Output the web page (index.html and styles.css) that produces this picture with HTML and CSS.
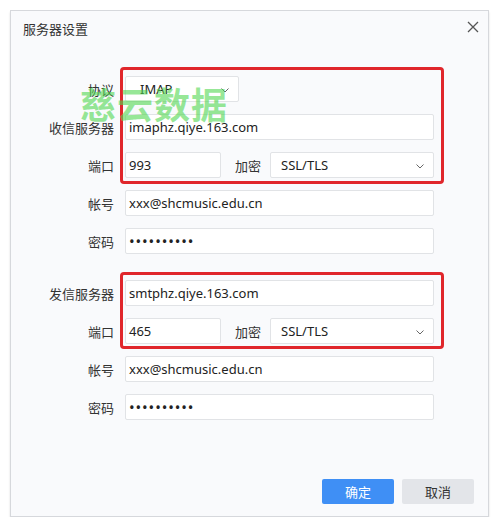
FILE: index.html
```html
<!DOCTYPE html>
<html lang="zh">
<head>
<meta charset="utf-8">
<link rel="stylesheet" href="styles.css">
</head>
<body>
<div class="dialog">
  <div class="header">
    <span class="title">服务器设置</span>
    <svg class="close" width="12" height="12" viewBox="0 0 12 12"><path d="M1 1L11 11M11 1L1 11" stroke="#555" stroke-width="1.3" fill="none"/></svg>
  </div>
  <div class="form">
    <div class="group">
      <div class="row">
        <span class="label">协议</span>
        <div class="field select proto">IMAP<svg class="chev" width="8" height="5" viewBox="0 0 8 5"><path d="M0.5 0.5L4 4L7.5 0.5" stroke="#666" stroke-width="1" fill="none"/></svg></div>
      </div>
      <div class="row">
        <span class="label">收信服务器</span>
        <div class="field wide">imaphz.qiye.163.com</div>
      </div>
      <div class="row">
        <span class="label">端口</span>
        <div class="field port">993</div>
        <span class="sublabel">加密</span>
        <div class="field select enc">SSL/TLS<svg class="chev" width="8" height="5" viewBox="0 0 8 5"><path d="M0.5 0.5L4 4L7.5 0.5" stroke="#666" stroke-width="1" fill="none"/></svg></div>
      </div>
      <div class="row">
        <span class="label">帐号</span>
        <div class="field wide">xxx@shcmusic.edu.cn</div>
      </div>
      <div class="row">
        <span class="label">密码</span>
        <div class="field wide dots">••••••••••</div>
      </div>
      <div class="mark mark1"></div>
      <div class="watermark">慈云数据</div>
    </div>
    <div class="group">
      <div class="row">
        <span class="label">发信服务器</span>
        <div class="field wide">smtphz.qiye.163.com</div>
      </div>
      <div class="row">
        <span class="label">端口</span>
        <div class="field port">465</div>
        <span class="sublabel">加密</span>
        <div class="field select enc">SSL/TLS<svg class="chev" width="8" height="5" viewBox="0 0 8 5"><path d="M0.5 0.5L4 4L7.5 0.5" stroke="#666" stroke-width="1" fill="none"/></svg></div>
      </div>
      <div class="row">
        <span class="label">帐号</span>
        <div class="field wide">xxx@shcmusic.edu.cn</div>
      </div>
      <div class="row">
        <span class="label">密码</span>
        <div class="field wide dots">••••••••••</div>
      </div>
      <div class="mark mark2"></div>
    </div>
  </div>
  <div class="footer">
    <button class="btn primary">确定</button>
    <button class="btn">取消</button>
  </div>
</div>
</body>
</html>
```
FILE: styles.css
```css
html, body {
  margin: 0;
  padding: 0;
  background: #ffffff;
}
body {
  font-family: "Noto Sans", "Noto Sans CJK SC", sans-serif;
  font-size: 13px;
  color: #333;
}
.dialog {
  margin: 10px 0 0 10px;
  width: 477px;
  height: 505px;
  border: 1px solid #d6d8dc;
  background: #f9fafc;
  box-shadow: 0 2px 2px rgba(0,0,0,0.12);
  display: flex;
  flex-direction: column;
  position: relative;
}
.header {
  height: 38px;
  display: flex;
  align-items: center;
  justify-content: space-between;
  padding: 0 9px 0 12px;
}
.title {
  font-size: 13px;
  color: #333;
  margin-top: -3px;
}
.close {
  margin-top: -6px;
}
.form {
  padding-top: 27px;
  display: flex;
  flex-direction: column;
  gap: 26px;
}
.group {
  display: flex;
  flex-direction: column;
  gap: 12px;
  position: relative;
}
.row {
  display: flex;
  align-items: center;
  height: 26px;
}
.label {
  width: 80px;
  margin-left: 23px;
  margin-right: 11px;
  text-align: right;
  color: #333;
  white-space: nowrap;
}
.field {
  box-sizing: border-box;
  height: 26px;
  background: #fff;
  border: 1px solid #e1e3e6;
  border-radius: 2px;
  padding: 0 3px;
  display: flex;
  align-items: center;
  color: #222;
  position: relative;
  white-space: nowrap;
}
.wide { width: 309px; }
.proto { width: 114px; padding-left: 14px; }
.port { width: 96px; }
.enc { width: 164px; padding-left: 10px; }
.sublabel {
  margin-left: 14px;
  margin-right: 9px;
  color: #333;
}
.chev {
  position: absolute;
  right: 9px;
  top: 11px;
}
.dots {
  font-size: 15px;
  letter-spacing: 0.9px;
  color: #222;
}
.mark {
  position: absolute;
  border: 3px solid #e0262b;
  border-radius: 4px;
  left: 109px;
  width: 318px;
  pointer-events: none;
}
.mark1 { top: -9px; height: 111px; }
.mark2 { top: -8px; height: 71px; }
.watermark {
  position: absolute;
  left: 69px;
  top: 7px;
  font-family: "Noto Sans CJK SC", sans-serif;
  font-weight: 700;
  font-size: 36px;
  line-height: 40px;
  letter-spacing: 1px;
  color: rgba(80, 215, 80, 0.6);
  pointer-events: none;
}
.footer {
  margin-top: auto;
  display: flex;
  justify-content: flex-end;
  gap: 8px;
  padding: 0 14px 12px 0;
}
.btn {
  width: 72px;
  height: 25px;
  border: none;
  border-radius: 2px;
  background: #e3e5e9;
  color: #333;
  font-family: "Noto Sans CJK SC", sans-serif;
  font-size: 13px;
  padding: 0;
}
.btn.primary {
  background: #3f8ff5;
  color: #fff;
}
```
